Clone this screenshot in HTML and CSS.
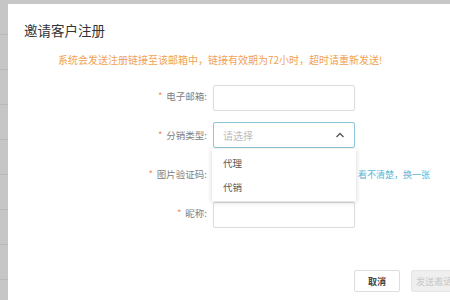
FILE: index.html
```html
<!DOCTYPE html>
<html lang="zh">
<head>
  <meta charset="UTF-8" />
  <title>邀请客户注册</title>
  <link rel="stylesheet" href="styles.css">
</head>
<body>
  <div class="dialog">
    <h2 class="title">邀请客户注册</h2>
    <p class="notice">系统会发送注册链接至该邮箱中，链接有效期为72小时，超时请重新发送!</p>

    <div class="form">
      <div class="row">
        <label class="label"><span class="star">*</span>电子邮箱:</label>
        <div class="control"><input class="input" type="text" /></div>
      </div>

      <div class="row">
        <label class="label"><span class="star">*</span>分销类型:</label>
        <div class="control">
          <div class="select">
            <span class="placeholder">请选择</span>
            <svg class="caret" width="10" height="6" viewBox="0 0 10 6">
              <path d="M1.5 5 L5 1.5 L8.5 5" fill="none" stroke="#555" stroke-width="1.3"/>
            </svg>
          </div>
          <ul class="menu">
            <li>代理</li>
            <li>代销</li>
          </ul>
        </div>
      </div>

      <div class="row">
        <label class="label"><span class="star">*</span>图片验证码:</label>
        <div class="control"><input class="input" type="text" /></div>
        <a class="refresh" href="#">看不清楚，换一张</a>
      </div>

      <div class="row">
        <label class="label"><span class="star">*</span>昵称:</label>
        <div class="control"><input class="input" type="text" /></div>
      </div>
    </div>

    <div class="footer">
      <button class="btn">取消</button>
      <button class="btn btn-primary" disabled>发送邀请</button>
    </div>
  </div>
</body>
</html>
```

FILE: styles.css
```css
* {
  margin: 0;
  padding: 0;
  box-sizing: border-box;
}

body {
  font-family: "Noto Sans CJK SC", "Noto Sans", sans-serif;
  background-color: #c6c6c6;
  background-image: repeating-linear-gradient(to bottom, transparent 0, transparent 34px, #bababa 34px, #bababa 35px);
  overflow: hidden;
  height: 300px;
  padding: 4px 0 0 8px;
}

.dialog {
  background: #fff;
  width: 470px;
  height: 320px;
  padding: 16px 21px 0 16px;
}

.title {
  font-size: 13.5px;
  font-weight: normal;
  color: #333;
  line-height: 20px;
}

.notice {
  margin: 12px 0 0 34px;
  font-size: 10px;
  line-height: 16px;
  color: #f0a254;
}

.form {
  margin-top: 15px;
}

.row {
  display: flex;
  align-items: center;
  height: 26px;
  margin-bottom: 13px;
}

.label {
  width: 183px;
  text-align: right;
  font-size: 9.5px;
  color: #808080;
  margin-right: 6px;
}

.star {
  color: #f08a5d;
  margin-right: 4px;
}

.control {
  position: relative;
  width: 142px;
  height: 26px;
}

.input {
  width: 100%;
  height: 100%;
  border: 1px solid #dcdcdc;
  border-radius: 2px;
  outline: none;
}

.select {
  height: 100%;
  border: 1px solid #8ec7d9;
  border-radius: 2px;
  display: flex;
  align-items: center;
  justify-content: space-between;
  padding: 0 9px 0 9px;
}

.placeholder {
  font-size: 10px;
  color: #bdbdbd;
}

.menu {
  position: absolute;
  top: 27px;
  left: -1px;
  width: 144px;
  list-style: none;
  background: #fff;
  padding: 2px 0;
  box-shadow: 0 1px 5px rgba(0, 0, 0, 0.18);
  z-index: 2;
}

.menu li {
  height: 24px;
  line-height: 24px;
  padding-left: 11px;
  font-size: 9.5px;
  color: #555;
}

.refresh {
  margin-left: 3px;
  font-size: 9px;
  color: #5ab6d8;
  text-decoration: none;
}

.footer {
  margin-top: 44px;
  display: flex;
  justify-content: flex-end;
  gap: 11px;
}

.btn {
  width: 46px;
  height: 22px;
  font-family: inherit;
  font-size: 9px;
  font-weight: bold;
  color: #444;
  background: #fff;
  border: 1px solid #dedede;
  border-radius: 2px;
}

.btn-primary {
  background: #efefef;
  border-color: #e6e6e6;
  color: #c8c8c8;
  font-weight: normal;
}
```
